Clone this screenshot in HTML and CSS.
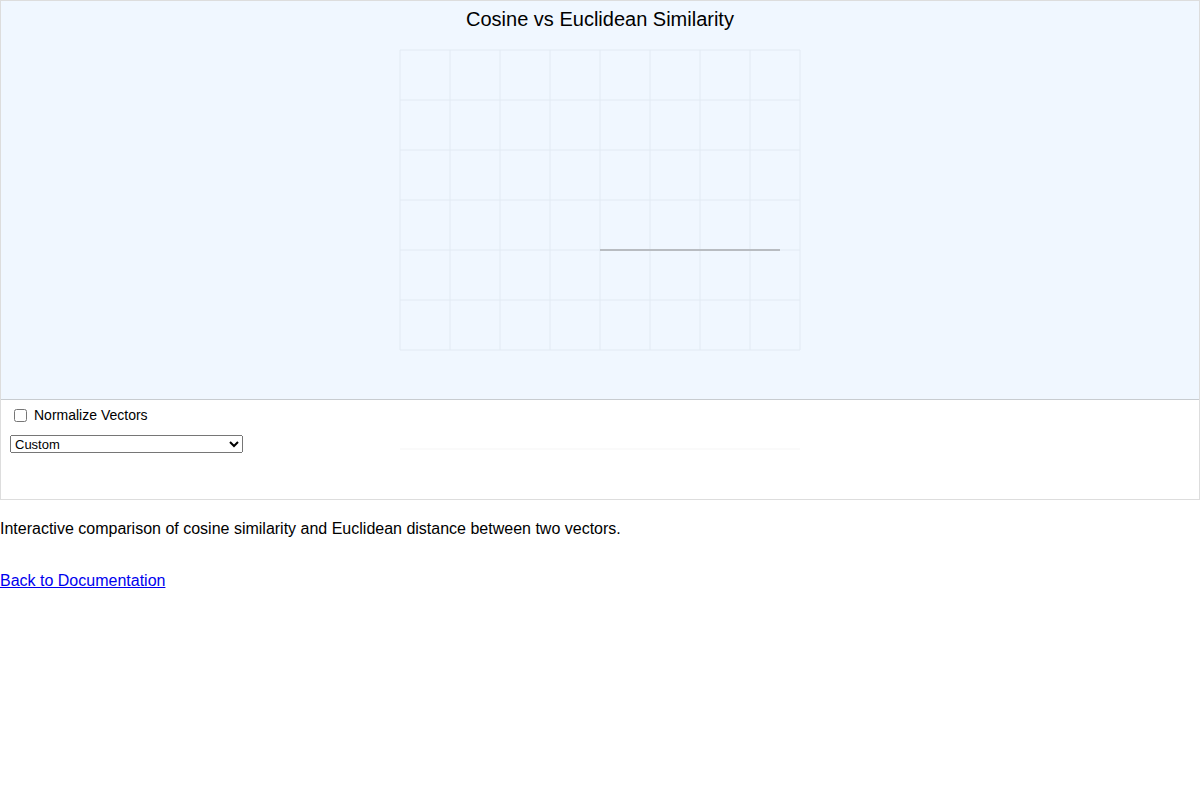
FILE: index.html
```html
<!DOCTYPE html>
<html lang="en">
<head>
  <meta charset="UTF-8" />
  <title>Cosine vs Euclidean Similarity</title>
  <link rel="stylesheet" href="styles.css">
</head>
<body>
  <main class="sketch">
    <div class="canvas">
      <h1 class="title">Cosine vs Euclidean Similarity</h1>
      <svg class="plot" width="1198" height="398" viewBox="1 1 1198 398">
        <g class="grid">
          <line x1="400" y1="50" x2="400" y2="350"/>
          <line x1="450" y1="50" x2="450" y2="350"/>
          <line x1="500" y1="50" x2="500" y2="350"/>
          <line x1="550" y1="50" x2="550" y2="350"/>
          <line x1="600" y1="50" x2="600" y2="350"/>
          <line x1="650" y1="50" x2="650" y2="350"/>
          <line x1="700" y1="50" x2="700" y2="350"/>
          <line x1="750" y1="50" x2="750" y2="350"/>
          <line x1="800" y1="50" x2="800" y2="350"/>
          <line x1="400" y1="50" x2="800" y2="50"/>
          <line x1="400" y1="100" x2="800" y2="100"/>
          <line x1="400" y1="150" x2="800" y2="150"/>
          <line x1="400" y1="200" x2="800" y2="200"/>
          <line x1="400" y1="250" x2="800" y2="250"/>
          <line x1="400" y1="300" x2="800" y2="300"/>
          <line x1="400" y1="350" x2="800" y2="350"/>
        </g>
        <line class="vector" x1="600" y1="250" x2="780" y2="250"/>
      </svg>
    </div>
    <div class="controls">
      <label class="toggle"><input type="checkbox" id="normalize"> Normalize Vectors</label>
      <select class="preset">
        <option>Custom</option>
        <option>Same direction</option>
        <option>Orthogonal</option>
        <option>Opposite</option>
      </select>
      <svg class="track" width="400" height="2" viewBox="0 0 400 2">
        <line x1="0" y1="1" x2="400" y2="1"/>
      </svg>
    </div>
  </main>

  <p class="caption">Interactive comparison of cosine similarity and Euclidean distance between two vectors.</p>
  <p class="back"><a href="#">Back to Documentation</a></p>
</body>
</html>
```

FILE: styles.css
```css
* {
  box-sizing: border-box;
}

body {
  margin: 0;
  font-family: 'Liberation Sans', Arial, sans-serif;
  font-size: 16px;
  color: #000;
  background: #fff;
}

.sketch {
  width: 1200px;
  border: 1px solid #dddddd;
}

.canvas {
  position: relative;
  height: 399px;
  background: #f0f7ff;
  border-bottom: 1px solid #c8ccd0;
}

.plot {
  display: block;
}

.title {
  position: absolute;
  top: 6px;
  left: 0;
  right: 0;
  margin: 0;
  text-align: center;
  font-size: 20px;
  font-weight: 400;
  line-height: 24px;
}

.grid line {
  stroke: #e2eaf3;
  stroke-width: 1;
}

.vector {
  stroke: #b8bcc1;
  stroke-width: 2;
}

.controls {
  position: relative;
  height: 99px;
  padding: 7px 0 0 9px;
  display: flex;
  flex-direction: column;
  align-items: flex-start;
  gap: 12px;
}

.toggle {
  font-size: 14px;
  line-height: 16px;
  display: flex;
  align-items: center;
  gap: 7px;
  margin-left: 4px;
}

.toggle input {
  margin: 0;
  width: 13px;
  height: 13px;
}

.preset {
  width: 233px;
  height: 18px;
  font-family: 'Liberation Sans', Arial, sans-serif;
  font-size: 13px;
}

.track {
  position: absolute;
  left: 399px;
  top: 48px;
}

.track line {
  stroke: #f5f5f5;
  stroke-width: 1;
}

.caption {
  margin: 19px 0 0;
  line-height: 20px;
}

.back {
  margin: 32px 0 0;
  line-height: 20px;
}

.back a {
  color: #0000ee;
}
```
